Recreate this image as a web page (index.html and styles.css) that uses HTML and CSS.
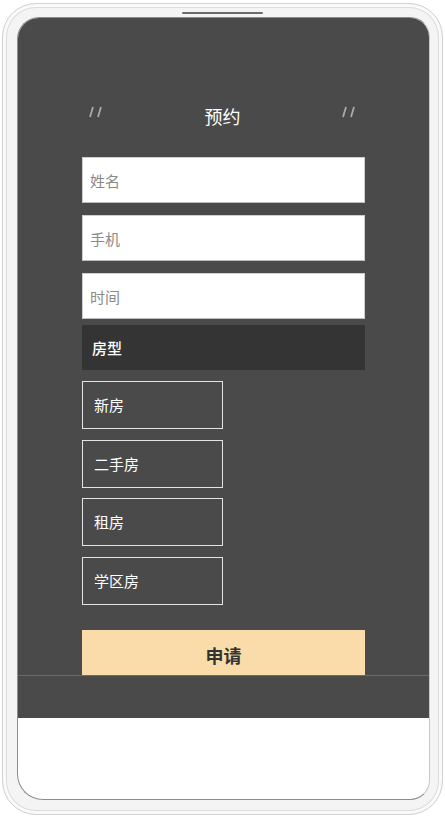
FILE: index.html
```html
<!DOCTYPE html>
<html lang="zh-CN">
<head>
  <meta charset="UTF-8">
  <meta name="viewport" content="width=device-width, initial-scale=1.0">
  <link rel="stylesheet" href="styles.css">
  <title>预约</title>
</head>
<body>
  <div class="phone">
    <div class="speaker"></div>
    <div class="screen">
      <div class="booking">
        <div class="booking-header">
          <svg class="mark" width="16" height="12" viewBox="0 0 16 12">
            <line x1="5" y1="1" x2="2" y2="11" />
            <line x1="13" y1="1" x2="10" y2="11" />
          </svg>
          <div class="booking-title">预约</div>
          <svg class="mark" width="16" height="12" viewBox="0 0 16 12">
            <line x1="5" y1="1" x2="2" y2="11" />
            <line x1="13" y1="1" x2="10" y2="11" />
          </svg>
        </div>
        <input class="field" type="text" placeholder="姓名">
        <input class="field" type="text" placeholder="手机">
        <input class="field" type="text" placeholder="时间">
        <div class="type-label">房型</div>
        <ul class="type-list">
          <li>新房</li>
          <li>二手房</li>
          <li>租房</li>
          <li>学区房</li>
        </ul>
        <button class="submit-btn">申请</button>
      </div>
      <div class="footer-bar"></div>
    </div>
  </div>
</body>
</html>
```

FILE: styles.css
```css
body {
  margin: 0;
  width: 445px;
  height: 817px;
  background-color: #fff;
  font-family: "Noto Sans CJK SC", "Noto Sans", sans-serif;
  overflow: hidden;
}

.phone {
  position: relative;
  box-sizing: border-box;
  width: 441px;
  height: 812px;
  margin: 3px 2px 2px 2px;
  padding: 13px 12px 14px 14px;
  border: 1px solid #d2d2d2;
  border-radius: 34px;
  background-color: #f4f4f4;
  box-shadow: inset 0 0 0 3px #fafafa, inset 0 0 0 4px #dcdcdc;
}

.speaker {
  position: absolute;
  top: 8px;
  left: 179px;
  width: 81px;
  height: 2px;
  border-radius: 2px;
  background-color: #6a6a6a;
}

.screen {
  box-sizing: border-box;
  height: 783px;
  border: 1px solid #8c8c8c;
  border-right-color: #c8c8c8;
  border-radius: 22px 20px 20px 26px;
  background-color: #fff;
  overflow: hidden;
}

.booking {
  height: 657px;
  padding: 83px 64px 0 64px;
  box-sizing: border-box;
  background-color: #4a4a4a;
  overflow: hidden;
}

.booking-header {
  display: flex;
  justify-content: space-between;
  align-items: flex-start;
  height: 30px;
  padding: 0 8px 0 6px;
  margin-bottom: 26px;
}

.mark {
  margin-top: 5px;
}

.mark line {
  stroke: #aaa;
  stroke-width: 1.8;
}

.booking-title {
  font-size: 18px;
  line-height: 30px;
  color: #fff;
}

.field {
  display: block;
  box-sizing: border-box;
  width: 100%;
  height: 46px;
  margin: 0 0 12px 0;
  padding: 0 7px;
  border: 1px solid #cfcfcf;
  border-bottom-color: #bdbdbd;
  background-color: #fff;
  font-family: inherit;
  font-size: 15px;
  color: #333;
  outline: none;
}

.field::placeholder {
  color: #8a8a8a;
}

.field:nth-of-type(3) {
  margin-bottom: 6px;
}

.type-label {
  height: 45px;
  padding-left: 10px;
  background-color: #343434;
  font-size: 15px;
  font-weight: 500;
  line-height: 45px;
  color: #fff;
}

.type-list {
  list-style: none;
  margin: 11px 0 0 0;
  padding: 0;
}

.type-list li {
  box-sizing: border-box;
  width: 141px;
  height: 48px;
  margin-bottom: 10.5px;
  padding-left: 11px;
  border: 1px solid #e4e4e4;
  font-size: 15px;
  line-height: 46px;
  color: #fff;
}

.submit-btn {
  display: block;
  width: 100%;
  height: 50px;
  margin-top: 25px;
  border: none;
  background-color: #f9dca9;
  font-family: inherit;
  font-size: 18px;
  font-weight: bold;
  color: #333;
}

.footer-bar {
  height: 42px;
  border-top: 1px solid #6a6a6a;
  background-color: #4a4a4a;
}
```
